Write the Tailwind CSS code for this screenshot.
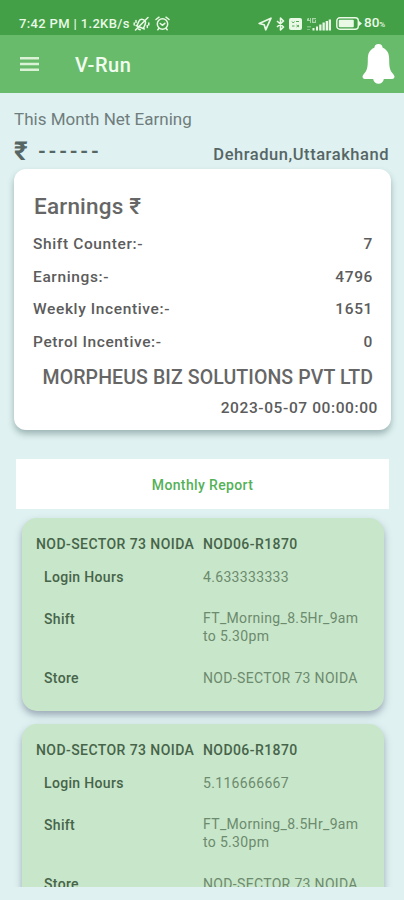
<!DOCTYPE html>
<html lang="en">
<head>
<meta charset="utf-8">
<title>V-Run</title>
<script src="https://cdn.jsdelivr.net/npm/@tailwindcss/browser@4"></script>
</head>
<body class="w-[404px] h-[900px] overflow-hidden bg-[#dff1f1] font-['Roboto','Noto_Sans',sans-serif] text-[#5c5c5c] whitespace-nowrap">
<div class="flex flex-col h-[900px]">
  <div class="h-[35px] shrink-0 bg-[#43a047] flex items-center pt-[12px] pl-[19px] pr-[18px] text-[#eaf8e6]">
    <span class="text-[13px] leading-[20px] font-medium tracking-[0.350px] w-[112px]">7:42 PM | 1.2KB/s</span>
    <svg class="ml-[2px] w-[17px] h-[16px]" viewBox="0 0 17 16" fill="none" stroke="currentColor" stroke-width="1.500" stroke-linecap="round" stroke-linejoin="round"><g transform="rotate(22 8.500 8)"><path d="M4 11.500h9M5 11.500V7c0-5 7-5 7 0v4.500M7.500 13.800h2"/></g><path d="M15 1.500L2.500 14M1.200 7v2M3 4.500v2M15.800 7v2M14.300 9.500v2"/></svg>
    <svg class="ml-[5px] w-[15px] h-[15px]" viewBox="0 0 15 15" fill="none" stroke="currentColor" stroke-width="1.500" stroke-linecap="round" stroke-linejoin="round"><circle cx="7.500" cy="8" r="5.200"/><path d="M1 3.500l3-2.300M14 3.500l-3-2.300M5.300 7.500l2 1.800 2.500-2M3.800 12.500l-1 1.200M11.200 12.500l1 1.200"/></svg>
    <svg class="ml-auto w-[14px] h-[14px]" viewBox="0 0 14 14" fill="none" stroke="currentColor" stroke-width="1.700" stroke-linejoin="round"><path d="M13 1.200L1.200 6.500l5 1.300 1.500 5z"/></svg>
    <svg class="ml-[4px] w-[9px] h-[14px]" viewBox="0 0 9 14" fill="none" stroke="currentColor" stroke-width="1.600" stroke-linejoin="round"><path d="M1 4l6.500 6L4.500 13V1l3 3L1 10"/></svg>
    <svg class="ml-[4px] w-[13px] h-[12px]" viewBox="0 0 13 12"><rect width="13" height="12" rx="2" fill="currentColor"/><path d="M3 3.500l1.200 1.500L5.500 3.500M7 3.500h3M3 8h2.500M7.500 7l2.500 2M10 7l-2.500 2" stroke="#43a047" stroke-width=".9" fill="none"/></svg>
    <svg class="ml-[4px] w-[25px] h-[14px]" viewBox="0 0 25 14" fill="currentColor"><path opacity=".6" d="M2 1h1v2h1V1h1v5H4V4H1V2zM6 1h4v1.200H7.200v2.500H9V3h1v3H6z"/><path opacity=".35" d="M1 9h4v1.500H1zM1 12h3v1H1z"/><path d="M6.500 11h2v2.500h-2zM10 9.500h2v4h-2zM13.200 7.500h2.300v6h-2.300zM16.500 5.500h2.300v8h-2.300zM19.700 4H22v9.500h-2.300zM22.700 2.500H25v11h-2.300z"/></svg>
    <svg class="ml-[5px] w-[26px] h-[13px]" viewBox="0 0 26 13"><rect x=".8" y=".8" width="21.500" height="11.400" rx="3" fill="none" stroke="currentColor" stroke-width="1.400"/><rect x="2.800" y="2.800" width="15" height="7.400" rx="1" fill="currentColor"/><path d="M23 4l3 2.500L23 9z" fill="currentColor"/></svg>
    <span class="ml-[2px] text-[13.500px] leading-[20px] font-medium w-[22px] flex items-baseline">80<span class="text-[8px]">%</span></span>
  </div>
  <div class="h-[58px] shrink-0 bg-[#69bb6c] flex items-center pl-[20px] pr-[9px] text-[#f2fbef]">
    <svg class="w-[20px] h-[16px]" viewBox="0 0 20 16" fill="#dcf2d6"><path d="M0 1h19v2.500H0zM0 6.700h19v2.500H0zM0 12.400h19v2.500H0z"/></svg>
    <span class="ml-[35px] text-[20px] leading-[24px] font-medium tracking-[0.500px] pt-[2px]">V-Run</span>
    <svg class="ml-auto w-[33px] h-[40px]" viewBox="0 0 34 40" preserveAspectRatio="none" fill="#fff"><path d="M17 0c2.800 0 4 1.700 4.300 3.700C26.500 5.700 28 10 28 15c0 9 .8 11.500 4.500 15.500 1.800 2 1 4.500-1.500 4.500h-8.500c-.7 6.300-10.300 6.300-11 0H3c-2.500 0-3.300-2.500-1.500-4.500C5.200 26.500 6 24 6 15c0-5 1.500-9.300 6.700-11.300C13 1.700 14.200 0 17 0z"/></svg>
  </div>
  <main class="flex flex-col h-[794px] overflow-hidden px-[14px] pt-[15px]">
    <div class="h-[22px] shrink-0 text-[17px] leading-[22px] text-[#6f7d7c]">This Month Net Earning</div>
    <div class="h-[39px] shrink-0 flex justify-between text-[#566665]">
      <div class="flex pt-[6px] leading-[30px] font-bold"><span class="text-[26px] w-[24px]">₹</span><span class="text-[20px] tracking-[2.700px]">------</span></div>
      <div class="text-[16.500px] leading-[20px] font-medium tracking-[0.540px] pt-[15px] pr-[1px]">Dehradun,Uttarakhand</div>
    </div>
    <section class="h-[261px] mr-[-1px] shrink-0 rounded-[12px] bg-white shadow-[0_4px_6px_rgba(60,90,90,0.4)]">
      <h2 class="pt-[23px] pl-[20px] text-[22.500px] leading-[28px] font-medium tracking-[0.200px] text-[#666]">Earnings ₹</h2>
      <div class="mt-[8px] pl-[19px] pr-[18px] text-[15.500px] leading-[32.700px] font-medium tracking-[0.620px]">
        <div class="flex justify-between"><span>Shift Counter:-</span><span>7</span></div>
        <div class="flex justify-between"><span>Earnings:-</span><span>4796</span></div>
        <div class="flex justify-between"><span>Weekly Incentive:-</span><span>1651</span></div>
        <div class="flex justify-between"><span>Petrol Incentive:-</span><span>0</span></div>
      </div>
      <div class="pr-[18px] mt-[6px] text-right text-[19.500px] leading-[26px] font-medium tracking-[0.100px] text-[#666]">MORPHEUS BIZ SOLUTIONS PVT LTD</div>
      <div class="pr-[13px] mt-[7px] text-right text-[15.500px] leading-[20px] font-medium tracking-[0.600px]">2023-05-07 00:00:00</div>
    </section>
    <div class="mt-[29px] ml-[2px] mr-[1px] h-[50px] shrink-0 bg-white flex items-center justify-center text-[14px] leading-[20px] font-medium tracking-[0.350px] pt-[2px] text-[#54b158]">Monthly Report</div>
    <div class="mt-[9px] ml-[8px] mr-[6px] flex flex-col gap-[13px] text-[14px] leading-[18px] tracking-[0.330px] text-[#6c8a6e]">
      <article class="h-[193px] shrink-0 rounded-[15px] bg-[#c8e6c9] shadow-[0_4px_7px_rgba(90,100,125,0.5)] pt-[17px]">
        <div class="flex font-medium tracking-[0.420px] text-[#46644a]"><span class="pl-[14px] w-[181px]">NOD-SECTOR 73 NOIDA</span><span>NOD06-R1870</span></div>
        <div class="flex mt-[15px]"><span class="pl-[22px] w-[181px] font-medium text-[#46644a]">Login Hours</span><span>4.633333333</span></div>
        <div class="flex mt-[24px]"><span class="pl-[22px] w-[181px] font-medium text-[#46644a]">Shift</span><span class="leading-[17.500px]">FT_Morning_8.5Hr_9am<br>to 5.30pm</span></div>
        <div class="flex mt-[24px]"><span class="pl-[22px] w-[181px] font-medium text-[#46644a]">Store</span><span>NOD-SECTOR 73 NOIDA</span></div>
      </article>
      <article class="h-[193px] shrink-0 rounded-[15px] bg-[#c8e6c9] shadow-[0_4px_7px_rgba(90,100,125,0.5)] pt-[17px]">
        <div class="flex font-medium tracking-[0.420px] text-[#46644a]"><span class="pl-[14px] w-[181px]">NOD-SECTOR 73 NOIDA</span><span>NOD06-R1870</span></div>
        <div class="flex mt-[15px]"><span class="pl-[22px] w-[181px] font-medium text-[#46644a]">Login Hours</span><span>5.116666667</span></div>
        <div class="flex mt-[24px]"><span class="pl-[22px] w-[181px] font-medium text-[#46644a]">Shift</span><span class="leading-[17.500px]">FT_Morning_8.5Hr_9am<br>to 5.30pm</span></div>
        <div class="flex mt-[24px]"><span class="pl-[22px] w-[181px] font-medium text-[#46644a]">Store</span><span>NOD-SECTOR 73 NOIDA</span></div>
      </article>
    </div>
  </main>
</div>
</body>
</html>
